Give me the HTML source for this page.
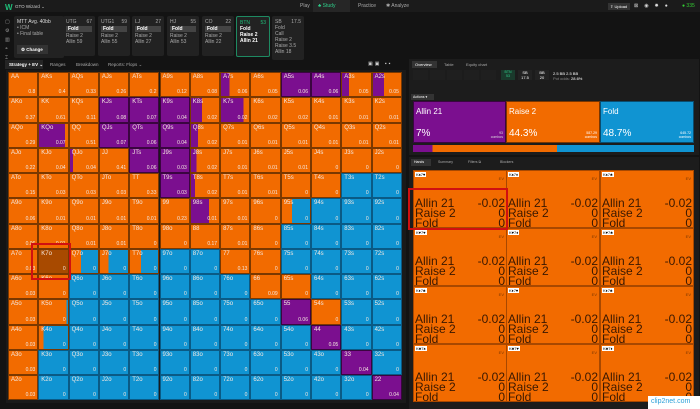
<!DOCTYPE html>
<html><head><meta charset="utf-8">
<style>
*{margin:0;padding:0;box-sizing:border-box}
body{width:700px;height:409px;background:#131313;font-family:"Liberation Sans",sans-serif;color:#ddd;position:relative;overflow:hidden}
.abs{position:absolute}
.top{left:0;top:0;width:700px;height:12px;background:#1b1b1b}
.pos{top:16px;height:40px;background:#222;border-radius:2px;font-size:5px;color:#aaa;padding:3px 3px}
.pos b{display:block;color:#fff}
.pos .f{background:#444;color:#fff;padding:0 2px;margin:1px 0;font-weight:bold}
.cell{position:absolute;overflow:hidden;border:1px solid #4a2a10}
.cell span{position:absolute;font-size:6px;color:#f4e8e0}
.cell .n{left:2px;top:1px}
.cell .v{right:2px;bottom:1px;font-size:5px}
.hc{position:absolute;background:#f26b00;border:1px solid #a84800;color:#3a1800;font-size:12px;line-height:10px}
.hc .cd{position:absolute;left:1px;top:1px;background:#fff;color:#000;font-size:4px;line-height:5px;padding:0 1px}
.hc .ev{position:absolute;right:2px;top:3px;font-size:4px;color:#7a3600}
.hc .l{position:absolute;left:1px;right:1px;display:flex;justify-content:space-between}
</style></head><body>
<div class="abs top"></div>
<div class="abs" style="left:5px;top:3px;color:#1fbf7a;font-weight:bold;font-size:8px">W</div>
<div class="abs" style="left:15px;top:4px;font-size:4.5px;color:#ccc">GTO Wizard ⌄</div>
<div class="abs" style="left:300px;top:3px;font-size:5px;color:#aaa">Play</div>
<div class="abs" style="left:313px;top:0;width:37px;height:12px;background:#262626"></div>
<div class="abs" style="left:318px;top:3px;font-size:5px;color:#2ecf8a">♣ Study</div>
<div class="abs" style="left:358px;top:3px;font-size:5px;color:#aaa">Practice</div>
<div class="abs" style="left:386px;top:3px;font-size:5px;color:#aaa">✱ Analyze</div>
<div class="abs" style="left:608px;top:3px;width:22px;height:7px;background:#333;font-size:4px;color:#fff;padding:1px 2px">⇪ Upload</div>
<div class="abs" style="left:634px;top:3px;font-size:5px;color:#ddd;letter-spacing:6px">⊠◉✹●</div>
<div class="abs" style="left:682px;top:3px;font-size:5px;color:#3c3">● 335</div>
<div class="abs" style="left:5px;top:18px;font-size:5px;color:#999;line-height:9px">▢<br>⚙<br>▥<br>◓<br>⌶</div>
<div class="abs pos" style="left:14px;width:50px;height:42px"><span style="color:#ddd">MTT Avg. 40bb</span><br>• ICM<br>• Final table</div>
<div class="abs" style="left:17px;top:45px;width:31px;height:9px;background:#333;font-size:4.5px;color:#fff;padding:2px 4px;font-weight:bold">⚙ Change</div>
<div class="abs pos" style="left:63px;width:32px">UTG<span style="float:right">67</span><div class="f">Fold</div>Raise 2<br>Allin 59</div>
<div class="abs pos" style="left:98px;width:32px">UTG1<span style="float:right">59</span><div class="f">Fold</div>Raise 2<br>Allin 55</div>
<div class="abs pos" style="left:132px;width:32px">LJ<span style="float:right">27</span><div class="f">Fold</div>Raise 2<br>Allin 27</div>
<div class="abs pos" style="left:167px;width:32px">HJ<span style="float:right">55</span><div class="f">Fold</div>Raise 2<br>Allin 53</div>
<div class="abs pos" style="left:202px;width:32px">CO<span style="float:right">22</span><div class="f">Fold</div>Raise 2<br>Allin 22</div>
<div class="abs pos" style="left:236px;width:34px;height:41px;border:1px solid #1e8a62;color:#1fbf7a">BTN<span style="float:right">53</span><b>Fold</b><b>Raise 2</b><b>Allin 21</b></div>
<div class="abs pos" style="left:272px;width:32px;height:44px">SB<span style="float:right">17.5</span><br>Fold<br>Call<br>Raise 2<br>Raise 3.5<br>Allin 18</div>
<div class="abs" style="left:5px;top:60px;width:38px;height:9px;background:#252525"></div>
<div class="abs" style="left:9px;top:62px;font-size:4.5px;color:#fff;font-weight:bold">Strategy + EV ⌄</div>
<div class="abs" style="left:50px;top:62px;font-size:4.5px;color:#aaa">Ranges</div>
<div class="abs" style="left:76px;top:62px;font-size:4.5px;color:#aaa">Breakdown</div>
<div class="abs" style="left:108px;top:62px;font-size:4.5px;color:#aaa">Reports: Flops ⌄</div>
<div class="abs" style="left:368px;top:61px;font-size:5px;color:#ccc;letter-spacing:2px">▣▣ ▪▪</div>
<div class="abs" style="left:6px;top:70px;width:400px;height:333px;background:#1a1a1a"></div>
<div id="g"></div>
<div class="abs" style="left:31px;top:243px;width:40px;height:37px;border:2px solid #d01010"></div>
<div class="abs" style="left:409px;top:59px;width:290px;height:34px;background:#1c1c1c"></div>
<div class="abs" style="left:412px;top:61px;width:25px;height:7px;background:#333;font-size:4px;color:#fff;padding:1px 3px">Overview</div>
<div class="abs" style="left:444px;top:62px;font-size:4px;color:#aaa">Table</div>
<div class="abs" style="left:466px;top:62px;font-size:4px;color:#aaa">Equity chart</div>
<div class="abs" style="left:413px;top:70px;font-size:3.5px;color:#555">
<span style="display:inline-block;width:15px;height:10px;background:#1f1f1f;margin-right:2px"></span><span style="display:inline-block;width:15px;height:10px;background:#1f1f1f;margin-right:2px"></span><span style="display:inline-block;width:15px;height:10px;background:#1f1f1f;margin-right:2px"></span><span style="display:inline-block;width:15px;height:10px;background:#1f1f1f;margin-right:2px"></span><span style="display:inline-block;width:15px;height:10px;background:#1f1f1f;margin-right:2px"></span></div>
<div class="abs" style="left:501px;top:70px;width:14px;height:10px;background:#1a3a2c;font-size:3.5px;color:#2ecf8a;text-align:center">BTN<br>53</div>
<div class="abs" style="left:518px;top:70px;width:14px;height:10px;background:#222;font-size:4px;color:#fff;text-align:center">SB<br>17.5</div>
<div class="abs" style="left:535px;top:70px;width:14px;height:10px;background:#222;font-size:4px;color:#fff;text-align:center">BB<br>20</div>
<div class="abs" style="left:553px;top:71px;font-size:4px;color:#fff">2.5 BB 2.5 BB<br><span style="color:#888">Pot odds:</span> 28.6%</div>
<div class="abs" style="left:409px;top:93px;width:290px;height:62px;background:#1c1c1c"></div>
<div class="abs" style="left:411px;top:94px;width:23px;height:6px;background:#333;font-size:3.5px;color:#fff;padding:1px 2px">Actions ▾</div>
<div class="abs" style="left:413px;top:101px;width:93px;height:42px;background:#7b0f8f;border:1px solid #3a0540"><div style="position:absolute;left:2px;top:5px;font-size:8px;color:#fff">Allin 21</div><div style="position:absolute;left:2px;bottom:3px;font-size:10px;color:#fff">7%</div><div style="position:absolute;right:2px;bottom:3px;font-size:3.5px;color:#ddd;text-align:right">93<br>combos</div></div>
<div class="abs" style="left:506px;top:101px;width:94px;height:42px;background:#f26b00;border:1px solid #7a3600"><div style="position:absolute;left:2px;top:5px;font-size:8px;color:#fff">Raise 2</div><div style="position:absolute;left:2px;bottom:3px;font-size:10px;color:#fff">44.3%</div><div style="position:absolute;right:2px;bottom:3px;font-size:3.5px;color:#fff;text-align:right">587.29<br>combos</div></div>
<div class="abs" style="left:600px;top:101px;width:94px;height:42px;background:#1094d2;border:1px solid #0a4d70"><div style="position:absolute;left:2px;top:5px;font-size:8px;color:#fff">Fold</div><div style="position:absolute;left:2px;bottom:3px;font-size:10px;color:#fff">48.7%</div><div style="position:absolute;right:2px;bottom:3px;font-size:3.5px;color:#fff;text-align:right">645.72<br>combos</div></div>
<div class="abs" style="left:413px;top:145px;width:281px;height:7px;background:linear-gradient(90deg,#7b0f8f 0 7%,#f26b00 7% 51.3%,#1094d2 51.3%)"></div>
<div class="abs" style="left:409px;top:157px;width:290px;height:252px;background:#1c1c1c"></div>
<div class="abs" style="left:411px;top:159px;width:20px;height:7px;background:#333;font-size:3.5px;color:#fff;padding:1px 3px">Hands</div>
<div class="abs" style="left:438px;top:160px;font-size:3.5px;color:#aaa">Summary</div>
<div class="abs" style="left:468px;top:160px;font-size:3.5px;color:#aaa">Filters ⧉</div>
<div class="abs" style="left:500px;top:160px;font-size:3.5px;color:#aaa">Blockers</div>
<div id="h"></div>
<div class="abs" style="left:408px;top:188px;width:100px;height:42px;border:2px solid #d01010"></div>
<div class="abs" style="left:648px;top:396px;width:52px;height:13px;background:#fff;font-size:7px;color:#2aa0d8;padding:2px 3px">clip2net.com</div>
<script>
var R="AKQJT98765432".split("");
var O=[0,100],P=[100,0],B=[0,0];
function o(x){return [0,x]} function p(x){return [x,100-x]}
var M=[
[O,O,O,O,O,O,O,p(30),O,P,P,p(25),p(40)],
[O,O,O,P,P,P,p(40),p(80),O,O,O,O,O],
[O,p(90),O,P,P,P,p(25),O,O,O,O,O,O],
[O,O,p(10),O,P,P,p(20),O,O,O,O,O,O],
[O,O,O,O,O,P,p(15),O,O,O,O,B,B],
[O,O,O,O,O,O,p(65),O,O,o(35),B,B,B],
[O,O,O,O,O,O,O,O,O,B,B,B,B],
[O,O,o(40),o(30),o(40),B,B,O,O,B,B,B,B],
[O,O,B,B,B,B,B,B,O,O,B,B,B],
[O,o(95),B,B,B,B,B,B,B,P,O,B,B],
[O,o(15),B,B,B,B,B,B,B,B,P,B,B],
[O,B,B,B,B,B,B,B,B,B,B,P,B],
[O,B,B,B,B,B,B,B,B,B,B,B,P]];
var V=[
[.8,.4,.33,.26,.2,.12,.08,.06,.05,.06,.06,.05,.05],
[.37,.61,.11,.08,.07,.04,.02,.02,.02,.02,.01,.01,.01],
[.29,.07,.51,.07,.06,.04,.02,.01,.01,.01,.01,.01,.01],
[.22,.04,.04,.41,.06,.03,.02,.01,.01,.01,0,0,0],
[.15,.03,.03,.03,.33,.03,.02,.01,.01,0,0,0,0],
[.06,.01,.01,.01,.01,.23,.01,.01,0,0,0,0,0],
[.06,.01,.01,.01,0,0,.17,.01,0,0,0,0,0],
[.03,0,0,0,0,0,0,.13,0,0,0,0,0],
[.03,0,0,0,0,0,0,0,.09,0,0,0,0],
[.03,0,0,0,0,0,0,0,0,.06,0,0,0],
[.03,0,0,0,0,0,0,0,0,0,.05,0,0],
[.03,0,0,0,0,0,0,0,0,0,0,.04,0],
[.03,0,0,0,0,0,0,0,0,0,0,0,.04]];
var s="",w=30.3,h=25.25;
for(var i=0;i<13;i++)for(var j=0;j<13;j++){
 var n=i==j?R[i]+R[j]:(j>i?R[i]+R[j]+"s":R[j]+R[i]+"o");
 var a=M[i][j],pp=a[0],oo=pp+a[1];
 var oc=(i==7&&j==1)?"#a84a00":"#f26b00";
 var bg="linear-gradient(90deg,#7b0f8f 0 "+pp+"%,"+oc+" "+pp+"% "+oo+"%,#1094d2 "+oo+"%)";
 var bc=a[1]==0&&a[0]==0?"#0a5a85":(a[0]==100?"#3a0540":"#7a3800");
 s+='<div class="cell" style="left:'+(8+j*w).toFixed(1)+'px;top:'+(72+i*h).toFixed(1)+'px;width:'+w.toFixed(1)+'px;height:'+h.toFixed(1)+'px;background:'+bg+';border-color:'+bc+'"><span class="n">'+n+'</span><span class="v">'+V[i][j]+'</span></div>';
}
document.getElementById("g").innerHTML=s;
var cards=["K♠7♥","K♠7♦","K♠7♣","K♥7♥","K♥7♦","K♥7♣","K♦7♣","K♦7♥","K♦7♣","K♣7♠","K♣7♥","K♣7♦"];
var t="",cx=[413,506,600],cy=[170,228,286,344];
for(var r=0;r<4;r++)for(var c=0;c<3;c++){
 t+='<div class="hc" style="left:'+cx[c]+'px;top:'+cy[r]+'px;width:94px;height:58px"><span class="cd">'+cards[r*3+c]+'</span><span class="ev">EV</span><div class="l" style="top:27px"><span>Allin 21</span><span>-0.02</span></div><div class="l" style="top:37px"><span>Raise 2</span><span>0</span></div><div class="l" style="top:47px"><span>Fold</span><span>0</span></div></div>';
}
document.getElementById("h").innerHTML=t;
</script>
</body></html>
